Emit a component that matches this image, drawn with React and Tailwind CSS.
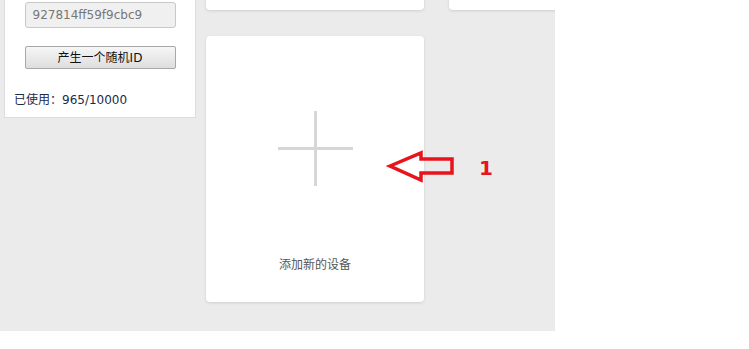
export default function App() {
    const font = { fontFamily: '"DejaVu Sans", "Noto Sans CJK SC", sans-serif' };

    return (
        <div className="w-[749px] h-[349px] bg-white relative overflow-hidden" style={font}>
            <div className="w-[555px] h-[331px] bg-[#ebebeb] flex overflow-hidden">
                {/* Left panel */}
                <div className="w-[206px] shrink-0 pl-[4px]">
                    <div className="w-[192px] h-[118px] bg-white border border-[#dcdcdc] border-t-0 flex flex-col items-center pt-[2px] relative">
                        <div className="w-[151px] h-[26px] rounded-[3px] border border-[#c8c8c8] bg-[#f0f0f0] text-[12px] text-[#777] flex items-center px-[7px] leading-none">
                            927814ff59f9cbc9
                        </div>
                        <button className="mt-[18px] w-[151px] h-[23px] rounded-[2px] border border-[#a8a8a8] bg-gradient-to-b from-[#f6f6f6] to-[#dedede] text-[12px] text-[#111] leading-none">
                            产生一个随机ID
                        </button>
                        <div className="self-start ml-[9px] mt-[25px] text-[12px] text-[#1c2a44] leading-none">
                            已使用：965/10000
                        </div>
                    </div>
                </div>

                {/* Device cards */}
                <div className="grid grid-cols-[218px_218px] gap-x-[25px] gap-y-[26px] mt-[-256px] content-start">
                    <div className="h-[266px] bg-white rounded-[4px] shadow-[0_1px_3px_rgba(0,0,0,0.12)]" />
                    <div className="h-[266px] bg-white rounded-[4px] shadow-[0_1px_3px_rgba(0,0,0,0.12)]" />
                    <div className="h-[266px] bg-white rounded-[4px] shadow-[0_1px_3px_rgba(0,0,0,0.12)] flex flex-col items-center">
                        <div className="mt-[75px] w-[75px] h-[75px] relative">
                            <div className="absolute left-0 right-0 top-[36px] h-[3px] bg-[#d6d6d6]" />
                            <div className="absolute top-0 bottom-0 left-[36px] w-[3px] bg-[#d6d6d6]" />
                        </div>
                        <div className="mt-[73px] text-[12px] text-[#555] leading-none">添加新的设备</div>
                    </div>
                </div>
            </div>

            {/* Annotation */}
            <svg className="absolute left-0 top-0" width="749" height="349">
                <polygon
                    points="390,166 421,153 421,159 452,159 452,173 421,173 421,180"
                    fill="none"
                    stroke="#e8141b"
                    strokeWidth="3.5"
                    strokeLinejoin="miter"
                />
            </svg>
            <div className="absolute left-[479px] top-[158px] text-[20px] font-bold text-[#e8141b] leading-none" style={{ fontFamily: '"DejaVu Sans", sans-serif' }}>
                1
            </div>
        </div>
    );
}
